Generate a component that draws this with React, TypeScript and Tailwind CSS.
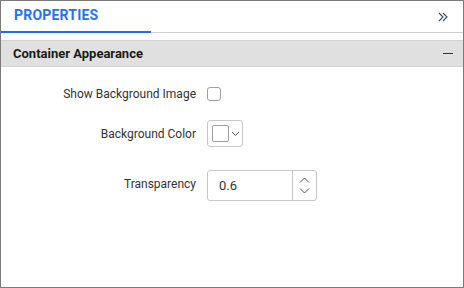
import React from "react";

export default function App() {
  return (
    <div className="w-[464px] h-[288px] bg-white border border-[#7a7a7a] flex flex-col" style={{ fontFamily: "Roboto, 'Liberation Sans', sans-serif" }}>
      <div className="h-[32px] flex items-stretch border-b border-[#d0d0d0] relative">
        <div className="w-[150px] border-b-2 border-[#1a6cf0] flex items-center pl-[13px] mb-[-1px]">
          <span className="text-[14px] font-bold text-[#2672ec] tracking-[0.2px] -mt-[1px]">PROPERTIES</span>
        </div>
        <div className="flex-1" />
        <div className="w-[24px] mr-[8px] flex items-center justify-center">
          <svg width="12" height="12" viewBox="0 0 12 12" fill="none" stroke="#3a4a6a" strokeWidth="1.1">
            <path d="M2 2 L6 6 L2 10" />
            <path d="M6 2 L10 6 L6 10" />
          </svg>
        </div>
      </div>
      <div className="h-[7px]" />
      <div className="h-[27px] bg-[#e0e0e0] border-t border-b border-[#d4d4d4] flex items-center pl-[12px] pr-[10px]">
        <span className="text-[13px] font-bold text-[#1a1a1a] flex-1">Container Appearance</span>
        <div className="w-[10px] h-[1.5px] bg-[#333]" />
      </div>
      <div className="flex flex-col pt-[19px]">
        <div className="flex items-center h-[16px]">
          <div className="w-[195px] text-right text-[12px] text-[#333]">Show Background Image</div>
          <div className="ml-[11px] w-[14px] h-[14px] border border-[#9e9e9e] rounded-[3px]" />
        </div>
        <div className="flex items-center mt-[18px] h-[27px]">
          <div className="w-[195px] text-right text-[12px] text-[#333]">Background Color</div>
          <div className="ml-[11px] w-[36px] h-[27px] border border-[#c8c8c8] rounded-[3px] flex items-center pl-[4px]">
            <div className="w-[17px] h-[17px] border border-[#9e9e9e] rounded-[2px]" />
            <svg width="9" height="6" viewBox="0 0 9 6" fill="none" stroke="#555" strokeWidth="1" className="ml-[2px]">
              <path d="M1 1 L4.5 4.5 L8 1" />
            </svg>
          </div>
        </div>
        <div className="flex items-center mt-[23px] h-[31px]">
          <div className="w-[195px] text-right text-[12px] text-[#333] -mt-[3px]">Transparency</div>
          <div className="ml-[11px] w-[110px] h-[31px] border border-[#c8c8c8] rounded-[3px] flex items-stretch">
            <div className="flex-1 flex items-center pl-[11px] text-[13px] text-[#333] pt-[1px]">0.6</div>
            <div className="w-[24px] border-l border-[#c8c8c8] flex flex-col items-center justify-center gap-[5px]">
              <svg width="11" height="6" viewBox="0 0 11 6" fill="none" stroke="#555" strokeWidth="1">
                <path d="M1 5.5 L5.5 1 L10 5.5" />
              </svg>
              <svg width="11" height="6" viewBox="0 0 11 6" fill="none" stroke="#555" strokeWidth="1">
                <path d="M1 0.5 L5.5 5 L10 0.5" />
              </svg>
            </div>
          </div>
        </div>
      </div>
    </div>
  );
}
